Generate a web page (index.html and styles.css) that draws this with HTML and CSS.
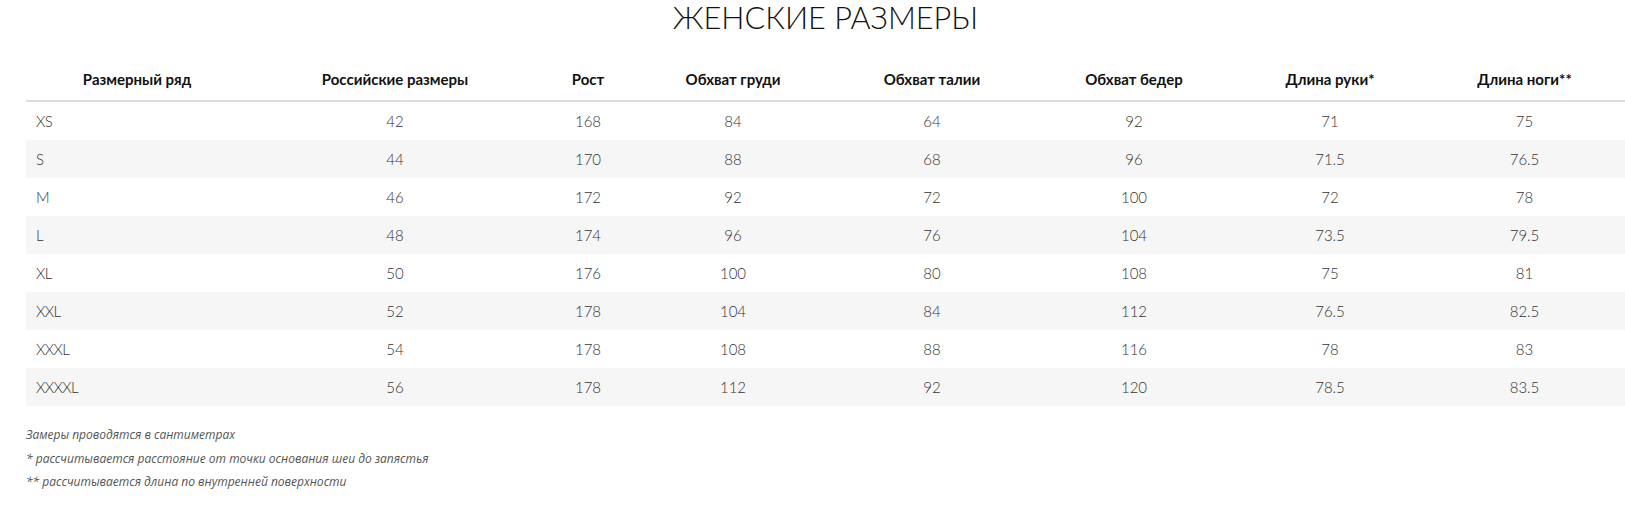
FILE: index.html
```html
<!DOCTYPE html>
<html lang="ru">
<head>
<meta charset="utf-8">
<link rel="stylesheet" href="styles.css">
<title>Женские размеры</title>
</head>
<body>
<div class="page">
  <h1 class="title">ЖЕНСКИЕ РАЗМЕРЫ</h1>
  <table class="sizes">
    <colgroup>
      <col class="c1"><col class="c2"><col class="c3"><col class="c4"><col class="c5"><col class="c6"><col class="c7"><col class="c8">
    </colgroup>
    <thead>
      <tr>
        <th>Размерный ряд</th><th>Российские размеры</th><th>Рост</th><th>Обхват груди</th><th>Обхват талии</th><th>Обхват бедер</th><th>Длина руки*</th><th>Длина ноги**</th>
      </tr>
    </thead>
    <tbody>
      <tr><td>XS</td><td>42</td><td>168</td><td>84</td><td>64</td><td>92</td><td>71</td><td>75</td></tr>
      <tr><td>S</td><td>44</td><td>170</td><td>88</td><td>68</td><td>96</td><td>71.5</td><td>76.5</td></tr>
      <tr><td>M</td><td>46</td><td>172</td><td>92</td><td>72</td><td>100</td><td>72</td><td>78</td></tr>
      <tr><td>L</td><td>48</td><td>174</td><td>96</td><td>76</td><td>104</td><td>73.5</td><td>79.5</td></tr>
      <tr><td>XL</td><td>50</td><td>176</td><td>100</td><td>80</td><td>108</td><td>75</td><td>81</td></tr>
      <tr><td>XXL</td><td>52</td><td>178</td><td>104</td><td>84</td><td>112</td><td>76.5</td><td>82.5</td></tr>
      <tr><td>XXXL</td><td>54</td><td>178</td><td>108</td><td>88</td><td>116</td><td>78</td><td>83</td></tr>
      <tr><td>XXXXL</td><td>56</td><td>178</td><td>112</td><td>92</td><td>120</td><td>78.5</td><td>83.5</td></tr>
    </tbody>
  </table>
  <div class="notes">
    <p>Замеры проводятся в сантиметрах</p>
    <p>* рассчитывается расстояние от точки основания шеи до запястья</p>
    <p>** рассчитывается длина по внутренней поверхности</p>
  </div>
</div>
</body>
</html>
```

FILE: styles.css
```css
html, body {
  margin: 0;
  padding: 0;
  background: #fff;
}
.page {
  padding-left: 26px;
  overflow: hidden;
}
.title {
  margin: 0;
  padding-top: 0;
  font-family: Lato, "Noto Sans", sans-serif;
  font-weight: 300;
  font-size: 30.7px;
  line-height: 36px;
  text-align: center;
  color: #111;
}
.sizes {
  width: 100%;
  border-collapse: collapse;
  table-layout: fixed;
  margin-top: 22px;
}
.c1 { width: 222px; }
.c2 { width: 294px; }
.c3 { width: 92px; }
.c4 { width: 198px; }
.c5 { width: 200px; }
.c6 { width: 204px; }
.c7 { width: 188px; }
.c8 { width: 201px; }
.sizes th {
  font-family: Lato, "Noto Sans", sans-serif;
  font-weight: 700;
  font-size: 15px;
  color: #111;
  text-align: center;
  height: 42px;
  padding: 0;
  border-bottom: 2px solid #ddd;
}
.sizes td {
  font-family: Lato, "Noto Sans", sans-serif;
  font-weight: 300;
  font-size: 15px;
  color: #333;
  text-align: center;
  height: 38px;
  padding: 0;
}
.sizes td:first-child {
  text-align: left;
  padding-left: 10px;
  letter-spacing: -0.6px;
}
.sizes tbody tr:nth-child(even) td {
  background: #f6f6f6;
}
.notes {
  margin-top: 17px;
  font-family: "Open Sans", sans-serif;
  font-style: italic;
  font-weight: 400;
  font-size: 12px;
  color: #555;
}
.notes p {
  margin: 0;
  line-height: 23.5px;
}
```
